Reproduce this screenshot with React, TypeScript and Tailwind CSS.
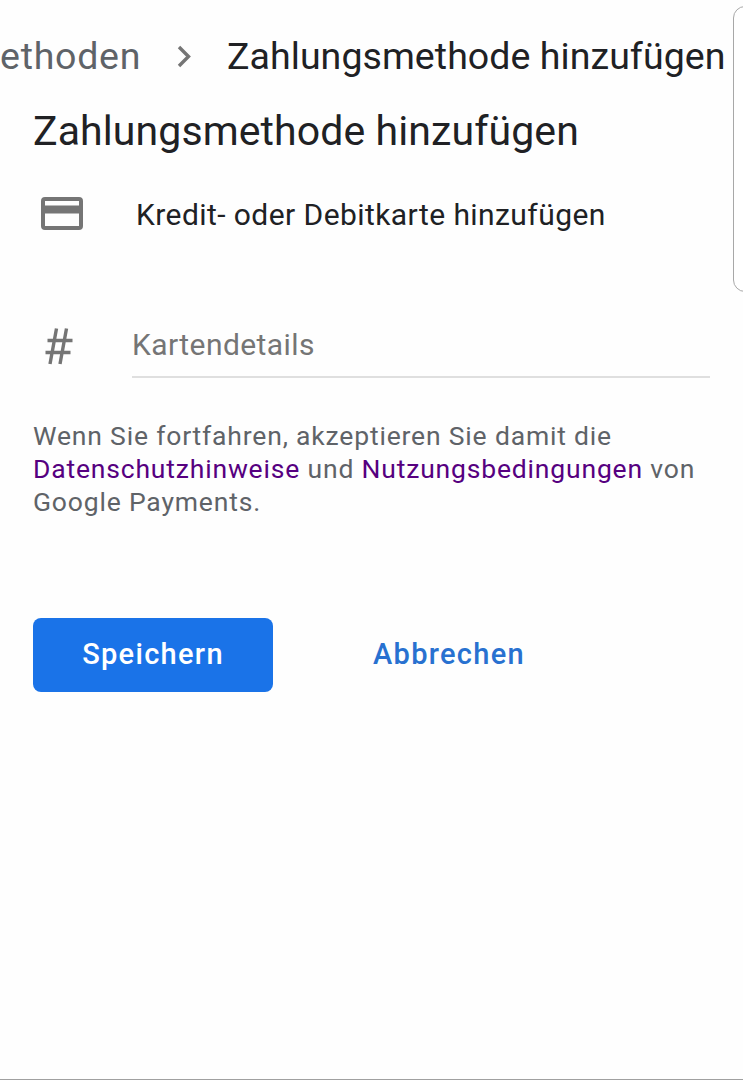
export default function App() {
  return (
    <main className="relative flex h-[1080px] w-[743px] flex-col overflow-hidden border-b border-[#a0a0a0] bg-[#fefefe] font-['Roboto',sans-serif] text-[#202124]">
      <nav className="flex h-[108px] items-center whitespace-nowrap pb-[1px] pt-[4px] text-[37.5px] leading-[44px]">
        <span className="w-[177px] tracking-[0.75px] text-[#5f6368]">ethoden</span>
        <svg className="mr-[34px] h-[24px] w-[16px] shrink-0" viewBox="0 0 16 24" fill="none" stroke="#757575" strokeWidth="3.4">
          <path d="M2 3l9.5 9.5L2 22" />
        </svg>
        <span className="tracking-[0.06px]">Zahlungsmethode hinzufügen</span>
      </nav>
      <h1 className="ml-[33px] whitespace-nowrap text-[41px] leading-[46px] tracking-[0.1px]">Zahlungsmethode hinzufügen</h1>
      <section className="flex h-[118px] items-center whitespace-nowrap">
        <svg className="ml-[41px] h-[33px] w-[42px] shrink-0" viewBox="0 0 42 33">
          <path fillRule="evenodd" fill="#757575" d="M4 0H38Q42 0 42 4V29Q42 33 38 33H4Q0 33 0 29V4Q0 0 4 0ZM4 4V8.5H38V4ZM4 16.5V29H38V16.5Z" />
        </svg>
        <span className="ml-[53px] pt-[3px] text-[30px] leading-9 tracking-[0.43px]">Kredit- oder Debitkarte hinzufügen</span>
      </section>
      <label className="mt-[38px] flex h-[68px] pr-[33px]">
        <svg className="ml-[45px] mt-[18px] h-[37px] w-[28px] shrink-0" viewBox="0 0 28 37" fill="none" stroke="#757575" strokeWidth="3.4">
          <path d="M11.5 .5L5 36M21.5 .5L15 36M2.5 12.5H27.5M.5 24.5H25.5" />
        </svg>
        <span className="ml-[59px] flex h-[68px] flex-1 border-b-2 border-[#dfdfdf] pt-[17px] text-[30px] leading-9 tracking-[0.43px] text-[#757575]">Kartendetails</span>
      </label>
      <p className="ml-[33px] mt-[41px] whitespace-nowrap text-[26.5px] leading-[33px] tracking-[0.82px] text-[#5f6368]">
        Wenn Sie fortfahren, akzeptieren Sie damit die<br />
        <a className="text-[#560080]">Datenschutzhinweise</a> und <a className="text-[#560080]">Nutzungsbedingungen</a> von<br />
        Google Payments.
      </p>
      <div className="ml-[33px] mt-[100px] flex h-[74px] text-[29px] font-medium tracking-[1.3px]">
        <button className="w-[240px] rounded-[8px] bg-[#1a73e8] text-white">Speichern</button>
        <button className="ml-[100px] text-[#2871d0]">Abbrechen</button>
      </div>
      <div className="absolute left-[733px] top-[6px] h-[286px] w-[30px] rounded-[12px] border border-[#a8a8a8] bg-white" />
    </main>
  );
}
